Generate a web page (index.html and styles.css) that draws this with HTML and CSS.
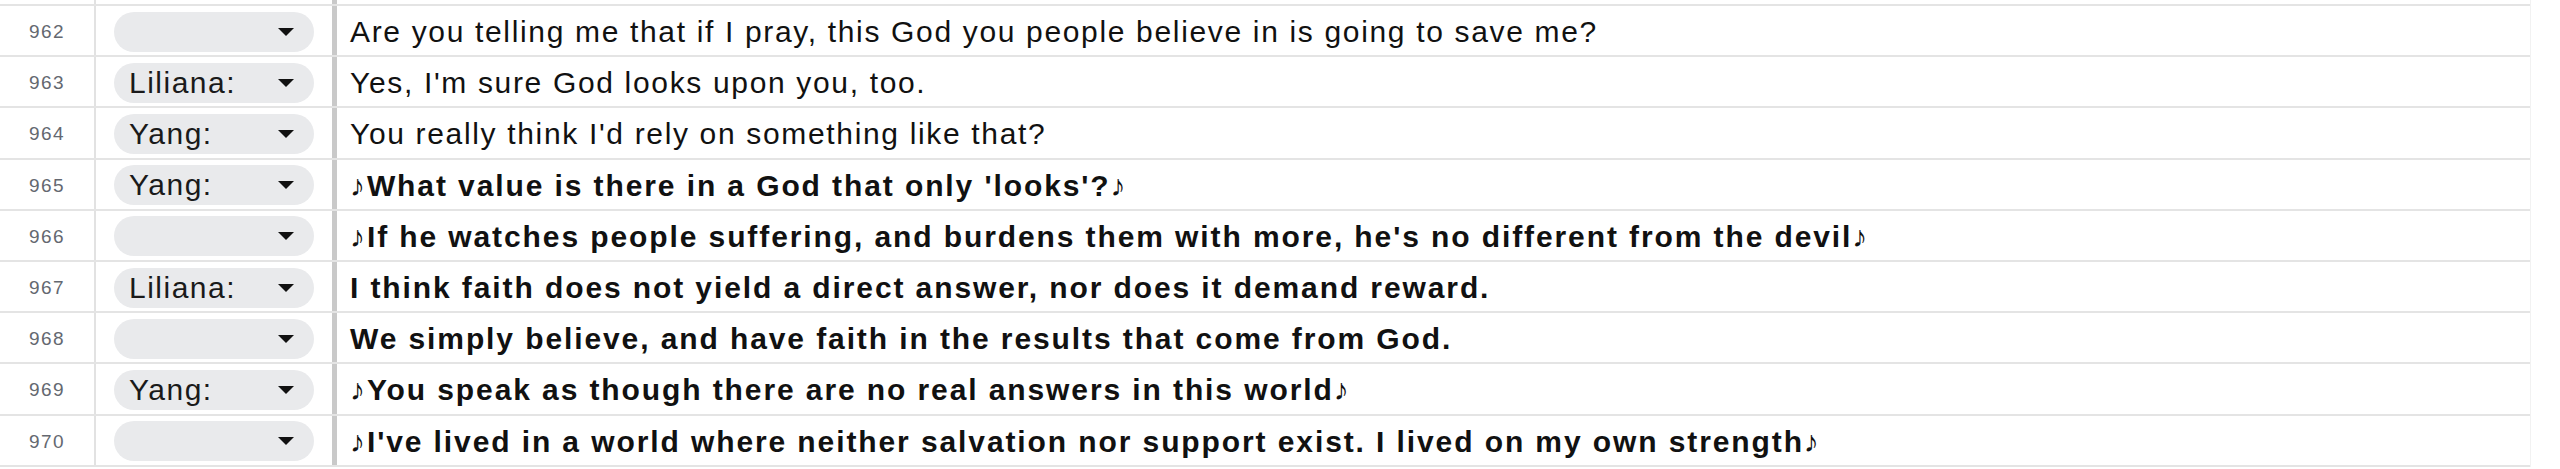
FILE: index.html
```html
<!DOCTYPE html>
<html>
<head>
<meta charset="utf-8">
<link rel="stylesheet" href="styles.css">
</head>
<body>
<div class="sheet">
  <div class="row top"><div class="num"></div><div class="spk"></div><div class="txt"></div></div>
  <div class="row"><div class="num">962</div><div class="spk"><div class="pill"><span class="name"></span><span class="arrow"></span></div></div><div class="txt">Are you telling me that if I pray, this God you people believe in is going to save me?</div></div>
  <div class="row"><div class="num">963</div><div class="spk"><div class="pill"><span class="name">Liliana:</span><span class="arrow"></span></div></div><div class="txt">Yes, I'm sure God looks upon you, too.</div></div>
  <div class="row"><div class="num">964</div><div class="spk"><div class="pill"><span class="name">Yang:</span><span class="arrow"></span></div></div><div class="txt">You really think I'd rely on something like that?</div></div>
  <div class="row"><div class="num">965</div><div class="spk"><div class="pill"><span class="name">Yang:</span><span class="arrow"></span></div></div><div class="txt bold">♪What value is there in a God that only 'looks'?♪</div></div>
  <div class="row"><div class="num">966</div><div class="spk"><div class="pill"><span class="name"></span><span class="arrow"></span></div></div><div class="txt bold">♪If he watches people suffering, and burdens them with more, he's no different from the devil♪</div></div>
  <div class="row"><div class="num">967</div><div class="spk"><div class="pill"><span class="name">Liliana:</span><span class="arrow"></span></div></div><div class="txt bold">I think faith does not yield a direct answer, nor does it demand reward.</div></div>
  <div class="row"><div class="num">968</div><div class="spk"><div class="pill"><span class="name"></span><span class="arrow"></span></div></div><div class="txt bold">We simply believe, and have faith in the results that come from God.</div></div>
  <div class="row"><div class="num">969</div><div class="spk"><div class="pill"><span class="name">Yang:</span><span class="arrow"></span></div></div><div class="txt bold">♪You speak as though there are no real answers in this world♪</div></div>
  <div class="row"><div class="num">970</div><div class="spk"><div class="pill"><span class="name"></span><span class="arrow"></span></div></div><div class="txt bold">♪I've lived in a world where neither salvation nor support exist. I lived on my own strength♪</div></div>
</div>
</body>
</html>
```
FILE: styles.css
```css
html, body {
  margin: 0;
  padding: 0;
  background: #ffffff;
}
body {
  font-family: "Liberation Sans", Arial, sans-serif;
  color: #111;
  overflow: hidden;
}
.sheet {
  width: 2530px;
  display: flex;
  flex-direction: column;
  border-right: 1px solid #f2f2f2;
}
.row {
  display: grid;
  grid-template-columns: 96px 241px 2188px;
  height: 51.2px;
  box-sizing: border-box;
  border-bottom: 2px solid #e4e4e4;
}
.row.top {
  height: 6px;
}
.num {
  border-right: 2px solid #e2e2e2;
  display: flex;
  align-items: center;
  justify-content: center;
  font-size: 19px;
  letter-spacing: 1.5px;
  color: #646870;
  padding-top: 3px;
}
.spk {
  border-right: 5px solid #c9c9c9;
  display: flex;
  align-items: center;
  padding-left: 18px;
  padding-top: 2px;
}
.pill {
  width: 200px;
  height: 40px;
  border-radius: 20px;
  background: #e9eaec;
  display: flex;
  align-items: center;
  justify-content: space-between;
  box-sizing: border-box;
  padding-left: 15px;
  padding-right: 20px;
}
.name {
  font-size: 30px;
  letter-spacing: 1.5px;
  color: #1a1a1a;
}
.arrow {
  width: 0;
  height: 0;
  border-left: 8px solid transparent;
  border-right: 8px solid transparent;
  border-top: 8px solid #111;
}
.txt {
  display: flex;
  align-items: center;
  padding-left: 13px;
  padding-top: 3px;
  font-size: 30px;
  letter-spacing: 1.66px;
  white-space: nowrap;
}
.txt.bold {
  font-weight: bold;
  letter-spacing: 1.9px;
}
```
